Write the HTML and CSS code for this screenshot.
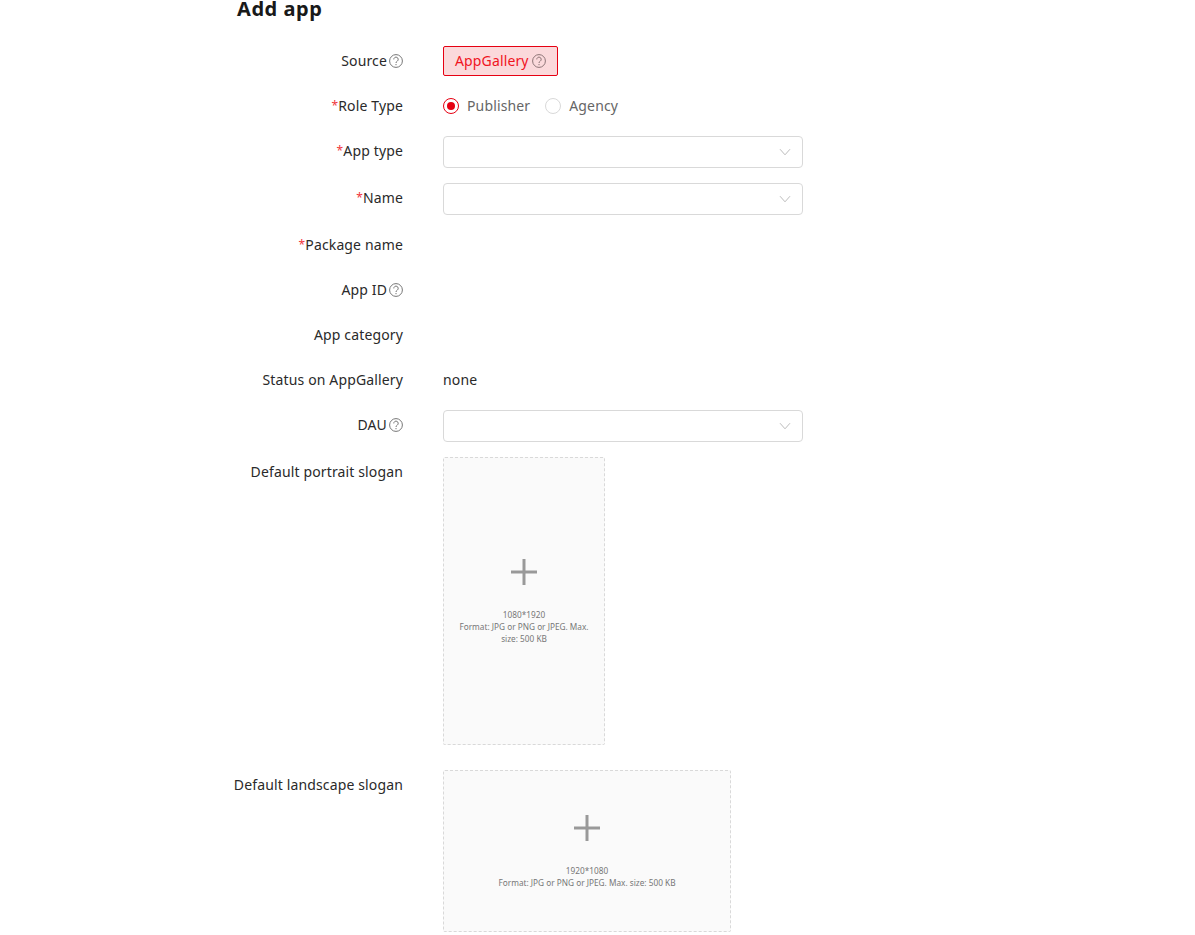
FILE: index.html
```html
<!DOCTYPE html>
<html lang="en">
<head>
<meta charset="utf-8">
<title>Add app</title>
<link rel="stylesheet" href="styles.css">
</head>
<body>
<main class="page">
  <h1 class="title">Add app</h1>
  <form class="form">
    <div class="row">
      <div class="label">Source<svg class="help" viewBox="0 0 14 14"><circle cx="7" cy="7" r="6.4"/><path d="M4.8 5.4a2.2 2.2 0 1 1 3.5 1.7c-.9.6-1.3 1-1.3 1.9"/><path d="M7 10v1.2"/></svg></div>
      <div class="control"><span class="source-tag">AppGallery<svg class="help" viewBox="0 0 14 14"><circle cx="7" cy="7" r="6.4"/><path d="M4.8 5.4a2.2 2.2 0 1 1 3.5 1.7c-.9.6-1.3 1-1.3 1.9"/><path d="M7 10v1.2"/></svg></span></div>
    </div>
    <div class="row">
      <div class="label"><span class="req">*</span>Role Type</div>
      <div class="control radios">
        <span class="radio-item"><span class="radio radio-on"></span><span class="radio-text">Publisher</span></span>
        <span class="radio-item"><span class="radio"></span><span class="radio-text">Agency</span></span>
      </div>
    </div>
    <div class="row row-select">
      <div class="label"><span class="req">*</span>App type</div>
      <div class="control"><div class="select"><svg class="chev" viewBox="0 0 12 8"><path d="M1 1.2l5 5.6 5-5.6"/></svg></div></div>
    </div>
    <div class="row row-select">
      <div class="label"><span class="req">*</span>Name</div>
      <div class="control"><div class="select"><svg class="chev" viewBox="0 0 12 8"><path d="M1 1.2l5 5.6 5-5.6"/></svg></div></div>
    </div>
    <div class="row">
      <div class="label"><span class="req">*</span>Package name</div>
      <div class="control"></div>
    </div>
    <div class="row">
      <div class="label">App ID<svg class="help" viewBox="0 0 14 14"><circle cx="7" cy="7" r="6.4"/><path d="M4.8 5.4a2.2 2.2 0 1 1 3.5 1.7c-.9.6-1.3 1-1.3 1.9"/><path d="M7 10v1.2"/></svg></div>
      <div class="control"></div>
    </div>
    <div class="row">
      <div class="label">App category</div>
      <div class="control"></div>
    </div>
    <div class="row">
      <div class="label">Status on AppGallery</div>
      <div class="control value">none</div>
    </div>
    <div class="row row-select">
      <div class="label">DAU<svg class="help" viewBox="0 0 14 14"><circle cx="7" cy="7" r="6.4"/><path d="M4.8 5.4a2.2 2.2 0 1 1 3.5 1.7c-.9.6-1.3 1-1.3 1.9"/><path d="M7 10v1.2"/></svg></div>
      <div class="control"><div class="select"><svg class="chev" viewBox="0 0 12 8"><path d="M1 1.2l5 5.6 5-5.6"/></svg></div></div>
    </div>
    <div class="row row-upload row-portrait">
      <div class="label">Default portrait slogan</div>
      <div class="control">
        <div class="upload upload-portrait">
          <svg class="plus" viewBox="0 0 26 26"><path d="M13 0v26M0 13h26"/></svg>
          <p class="hint">1080*1920<br>Format: JPG or PNG or JPEG. Max. size: 500 KB</p>
        </div>
      </div>
    </div>
    <div class="row row-upload">
      <div class="label">Default landscape slogan</div>
      <div class="control">
        <div class="upload upload-landscape">
          <svg class="plus" viewBox="0 0 26 26"><path d="M13 0v26M0 13h26"/></svg>
          <p class="hint">1920*1080<br>Format: JPG or PNG or JPEG. Max. size: 500 KB</p>
        </div>
      </div>
    </div>
  </form>
</main>
</body>
</html>
```
FILE: styles.css
```css
* { box-sizing: border-box; }
html, body { margin: 0; padding: 0; background: #fff; }
body { font-family: "Noto Sans", "Open Sans", sans-serif; font-size: 14px; letter-spacing: 0.14px; color: #2a2a2a; overflow: hidden; }
.page { height: 935px; padding-left: 237px; }
.title { margin: 0 0 28px; font-size: 20px; line-height: 18px; font-weight: 700; letter-spacing: 0.55px; color: #191919; }
.form { margin-left: -2px; display: flex; flex-direction: column; }
.row { display: flex; gap: 40px; min-height: 30px; margin-bottom: 15px; }
.row-portrait { margin-bottom: 25px; }
.label { width: 168px; flex: none; display: flex; justify-content: flex-end; align-items: center; height: 30px; padding-bottom: 2px; white-space: nowrap; }
.req { color: #f0363c; font-size: 12px; }
.control { display: flex; align-items: center; min-height: 30px; }
.value { padding-bottom: 2px; }
.help { width: 14px; height: 14px; margin-left: 2px; margin-top: 2px; flex: none; fill: none; stroke: #777; stroke-width: 1; }
.source-tag { display: inline-flex; align-items: center; height: 30px; padding: 0 11px 2px; border: 1px solid #e60012; border-radius: 2px; background: #fbd9db; color: #f0141e; }
.source-tag .help { margin-left: 3px; stroke: #8d7476; }
.radios { gap: 15px; }
.radio-item { display: inline-flex; align-items: center; gap: 8px; }
.radio-text { color: #666; margin-top: -2px; }
.radio { width: 16px; height: 16px; border-radius: 50%; border: 1px solid #d9d9d9; background: #fff; display: inline-flex; align-items: center; justify-content: center; }
.radio-on { border-color: #e60012; }
.radio-on::after { content: ""; width: 8px; height: 8px; border-radius: 50%; background: #e60012; }
.select { position: relative; width: 360px; height: 32px; border: 1px solid #d9d9d9; border-radius: 4px; background: #fff; }
.chev { position: absolute; right: 11px; top: 11px; width: 12px; height: 8px; fill: none; stroke: #bdbdbd; stroke-width: 1; }
.upload { display: flex; flex-direction: column; align-items: center; border: 1px dashed #d9d9d9; border-radius: 2px; background: #fafafa; text-align: center; letter-spacing: 0; }
.upload-portrait { width: 162px; height: 288px; padding: 101px 12px 0; }
.upload-landscape { width: 288px; height: 162px; padding: 44px 12px 0; }
.plus { width: 26px; height: 26px; fill: none; stroke: #999; stroke-width: 3; flex: none; }
.hint { margin: 24px 0 0; font-size: 8.25px; line-height: 12px; color: #777; }
```
